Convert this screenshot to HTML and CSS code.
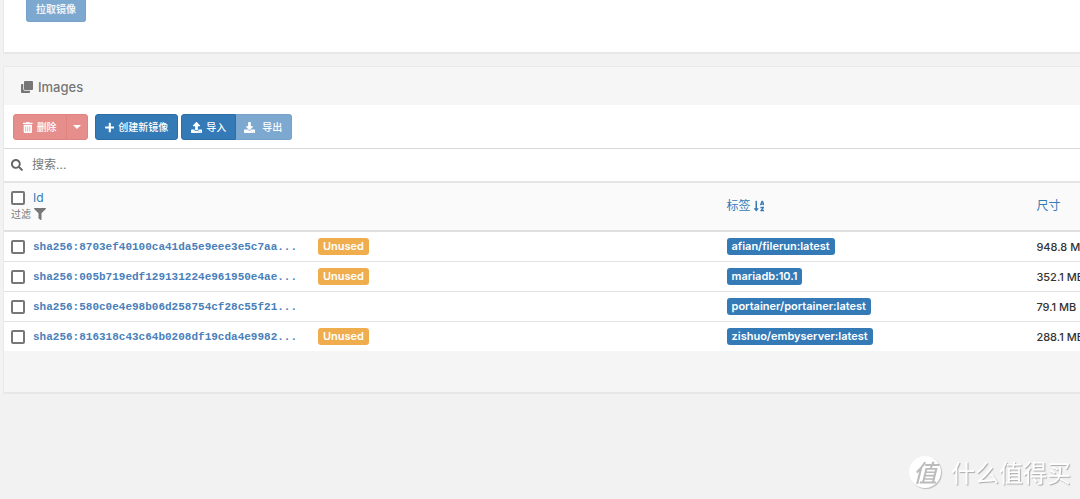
FILE: index.html
```html
<!DOCTYPE html>
<html lang="zh-CN">
<head>
<meta charset="utf-8">
<title>Images</title>
<link rel="stylesheet" href="styles.css">
</head>
<body>
<main class="page">
  <section class="panel pull-panel">
    <button class="btn primary faded pull" type="button">拉取镜像</button>
  </section>

  <section class="panel">
    <h1 class="panel-head">
      <svg class="icon" viewBox="0 0 512 512"><path d="M464 0c26.510 0 48 21.490 48 48v288c0 26.510-21.490 48-48 48H176c-26.510 0-48-21.490-48-48V48c0-26.510 21.490-48 48-48h288M176 416c-44.112 0-80-35.888-80-80V128H48c-26.510 0-48 21.490-48 48v288c0 26.510 21.490 48 48 48h288c26.510 0 48-21.490 48-48v-48H176z"/></svg>
      Images
    </h1>
    <div class="toolbar">
      <div class="group">
        <button class="btn danger faded" type="button"><svg class="icon" viewBox="0 0 448 512"><path d="M32 464a48 48 0 0 0 48 48h288a48 48 0 0 0 48-48V128H32zm272-256a16 16 0 0 1 32 0v224a16 16 0 0 1-32 0zm-96 0a16 16 0 0 1 32 0v224a16 16 0 0 1-32 0zm-96 0a16 16 0 0 1 32 0v224a16 16 0 0 1-32 0zM432 32H312l-9.400-18.700A24 24 0 0 0 281.100 0H166.800a23.720 23.720 0 0 0-21.400 13.300L136 32H16A16 16 0 0 0 0 48v32a16 16 0 0 0 16 16h416a16 16 0 0 0 16-16V48a16 16 0 0 0-16-16z"/></svg>删除</button>
        <button class="btn danger faded toggle" type="button" aria-label="更多删除选项"><span class="caret"></span></button>
      </div>
      <button class="btn primary" type="button"><svg class="icon" viewBox="0 0 448 512"><path d="M416 208H272V64c0-17.670-14.330-32-32-32h-32c-17.670 0-32 14.330-32 32v144H32c-17.670 0-32 14.330-32 32v32c0 17.670 14.330 32 32 32h144v144c0 17.670 14.330 32 32 32h32c17.670 0 32-14.330 32-32V304h144c17.670 0 32-14.330 32-32v-32c0-17.670-14.330-32-32-32z"/></svg>创建新镜像</button>
      <div class="group import-export">
        <button class="btn primary" type="button"><svg class="icon" viewBox="0 0 512 512"><path d="M296 384h-80c-13.300 0-24-10.700-24-24V192h-87.700c-17.800 0-26.700-21.500-14.100-34.100L242.300 5.700c7.500-7.500 19.800-7.500 27.300 0l152.200 152.200c12.600 12.600 3.700 34.100-14.100 34.100H320v168c0 13.300-10.700 24-24 24zm216-8v112c0 13.300-10.700 24-24 24H24c-13.300 0-24-10.700-24-24V376c0-13.300 10.700-24 24-24h136v8c0 30.900 25.100 56 56 56h80c30.900 0 56-25.100 56-56v-8h136c13.300 0 24 10.700 24 24zm-124 88c0-11-9-20-20-20s-20 9-20 20 9 20 20 20 20-9 20-20zm64 0c0-11-9-20-20-20s-20 9-20 20 9 20 20 20 20-9 20-20z"/></svg>导入</button>
        <button class="btn primary faded export" type="button"><svg class="icon" viewBox="0 0 512 512"><path d="M216 0h80c13.300 0 24 10.700 24 24v168h87.700c17.800 0 26.700 21.500 14.100 34.100L269.700 378.300c-7.500 7.500-19.800 7.500-27.300 0L90.100 226.100c-12.600-12.600-3.700-34.100 14.100-34.100H192V24c0-13.300 10.700-24 24-24zm296 376v112c0 13.300-10.700 24-24 24H24c-13.300 0-24-10.700-24-24V376c0-13.300 10.700-24 24-24h146.700l49 49c20.100 20.100 52.500 20.100 72.600 0l49-49H488c13.300 0 24 10.700 24 24zm-124 88c0-11-9-20-20-20s-20 9-20 20 9 20 20 20 20-9 20-20zm64 0c0-11-9-20-20-20s-20 9-20 20 9 20 20 20 20-9 20-20z"/></svg>导出</button>
      </div>
    </div>
    <label class="search">
      <svg class="icon" viewBox="0 0 512 512"><path d="M505 442.700L405.300 343c-4.500-4.500-10.600-7-17-7H372c27.600-35.300 44-79.700 44-128C416 93.100 322.900 0 208 0S0 93.100 0 208s93.100 208 208 208c48.300 0 92.700-16.400 128-44v16.300c0 6.400 2.500 12.500 7 17l99.700 99.700c9.400 9.400 24.600 9.400 33.900 0l28.300-28.300c9.400-9.400 9.400-24.600.1-34zM208 336c-70.700 0-128-57.200-128-128 0-70.700 57.200-128 128-128 70.700 0 128 57.200 128 128 0 70.700-57.200 128-128 128z"/></svg>
      <input class="search-input" type="text" placeholder="搜索..." aria-label="搜索">
    </label>
    <table class="images">
      <colgroup><col class="col-id"><col class="col-tags"><col class="col-size"></colgroup>
      <thead>
        <tr>
          <th>
            <div class="line"><input class="check" type="checkbox" aria-label="全选"><a class="sort" href="#">Id</a></div>
            <div class="filter">过滤 <svg class="icon" viewBox="0 0 512 512"><path d="M488 0H24C2.700 0-8 25.900 7.100 41L192 225.900V432c0 7.800 3.800 15.200 10.200 19.700l80 56C298 518.700 320 507.500 320 488V225.900L504.900 41C520 25.900 509.300 0 488 0z"/></svg></div>
          </th>
          <th><a class="sort" href="#">标签 <svg class="icon" viewBox="0 0 448 512"><path d="M176 352h-48V48a16 16 0 0 0-16-16H80a16 16 0 0 0-16 16v304H16c-14.200 0-21.400 17.200-11.300 27.300l80 96a16 16 0 0 0 22.600 0l80-96C197.300 369.300 190.200 352 176 352zm240-64H288a16 16 0 0 0-16 16v32a16 16 0 0 0 16 16h56l-61.300 70.400A32 32 0 0 0 272 446.400V464a16 16 0 0 0 16 16h128a16 16 0 0 0 16-16v-32a16 16 0 0 0-16-16h-56l61.300-70.400a32 32 0 0 0 10.700-24V304a16 16 0 0 0-16-16zm31.100-85.400l-59.300-160A16 16 0 0 0 372.700 32h-41.400a16 16 0 0 0-15.100 10.600l-59.300 160A16 16 0 0 0 272 224h24.800a16 16 0 0 0 15.200-11.100l4.400-12.900h71.200l4.400 12.900A16 16 0 0 0 407.200 224H432a16 16 0 0 0 15.100-21.400zM335.600 144L352 96l16.400 48z"/></svg></a></th>
          <th><a class="sort" href="#">尺寸</a></th>
        </tr>
      </thead>
      <tbody>
        <tr>
          <td><div class="line"><input class="check" type="checkbox" aria-label="选择 8703ef40100c"><a class="hash" href="#">sha256:8703ef40100ca41da5e9eee3e5c7aa...</a><span class="badge unused">Unused</span></div></td>
          <td><span class="badge">afian/filerun:latest</span></td>
          <td>948.8 MB</td>
        </tr>
        <tr>
          <td><div class="line"><input class="check" type="checkbox" aria-label="选择 005b719edf12"><a class="hash" href="#">sha256:005b719edf129131224e961950e4ae...</a><span class="badge unused">Unused</span></div></td>
          <td><span class="badge">mariadb:10.1</span></td>
          <td>352.1 MB</td>
        </tr>
        <tr>
          <td><div class="line"><input class="check" type="checkbox" aria-label="选择 580c0e4e98b0"><a class="hash" href="#">sha256:580c0e4e98b06d258754cf28c55f21...</a></div></td>
          <td><span class="badge">portainer/portainer:latest</span></td>
          <td>79.1 MB</td>
        </tr>
        <tr>
          <td><div class="line"><input class="check" type="checkbox" aria-label="选择 816318c43c64"><a class="hash" href="#">sha256:816318c43c64b0208df19cda4e9982...</a><span class="badge unused">Unused</span></div></td>
          <td><span class="badge">zishuo/embyserver:latest</span></td>
          <td>288.1 MB</td>
        </tr>
      </tbody>
    </table>
    <div class="panel-foot"></div>
  </section>
</main>
<div class="watermark"><span class="seal">值</span><span>什么值得买</span></div>
</body>
</html>
```

FILE: styles.css
```css
* { box-sizing: border-box; }

body {
  margin: 0;
  background: #f2f2f2;
  color: #333;
  font: 11px/16px Inter, "Noto Sans CJK SC", sans-serif;
  overflow-x: hidden;
}

.page { padding-left: 4px; }

.panel {
  margin-bottom: 13px;
  background: #fff;
  border-bottom: 2px solid #e7e7e7;
  box-shadow: -1px 0 0 #e9e9e9, 0 -1px 0 #e9e9e9;
}

.pull-panel { padding: 0 22px 30px; }

.icon {
  height: 11px;
  width: auto;
  fill: currentColor;
  flex: none;
}

.btn {
  display: inline-flex;
  align-items: center;
  gap: 4px;
  height: 26px;
  padding: 0 8px;
  border: 1px solid;
  border-radius: 3px;
  color: #fff;
  font: 500 10px/16px Inter, "Noto Sans CJK SC", sans-serif;
  white-space: nowrap;
}

.primary { background: #337ab7; border-color: #2e6da4; }
.primary.faded { background: #7da8d0; border-color: #78a2ca; }
.danger.faded { background: #e58e8b; border-color: #e0837f; }

.pull {
  height: 22px;
  border-top: 0;
  border-radius: 0 0 3px 3px;
  padding: 0 9px 4px;
  font-weight: 700;
  color: #edf4fa;
}

.panel-head {
  display: flex;
  align-items: center;
  gap: 5px;
  margin: 0;
  padding: 12px 17px 10px;
  background: #f6f6f6;
  color: #767676;
  font-size: 13px;
  font-weight: 500;
}

.panel-head .icon { height: 12px; }

.toolbar {
  display: flex;
  gap: 7px;
  padding: 9px 9px 8px;
}

.toolbar .btn { padding: 0 9px; }
.group { display: flex; }
.group .btn:first-child { border-radius: 3px 0 0 3px; }
.group .btn:last-child { border-radius: 0 3px 3px 0; }
.import-export { margin-left: -4px; }
.toolbar .export { gap: 7px; padding-left: 8px; border-left: 0; }
.toolbar .toggle { margin-left: -1px; padding: 0 6px; }

.caret {
  border: 4px solid transparent;
  border-top-color: #fff;
  border-bottom: 0;
}

.search {
  display: flex;
  align-items: center;
  gap: 9px;
  height: 33px;
  padding: 0 7px;
  border-top: 1px solid #d9d9d9;
  color: #666;
}

.search .icon { height: 12px; }

.search-input {
  flex: 1;
  border: 0;
  padding: 0;
  background: none;
  font: 12px/18px Inter, "Noto Sans CJK SC", sans-serif;
  outline: 0;
}

.search-input::placeholder { color: #777; }

.images {
  width: 100%;
  table-layout: fixed;
  border-collapse: separate;
  border-spacing: 0;
}

.col-id { width: 66.500%; }
.col-tags { width: 28.800%; }

.images th,
.images td {
  height: 30px;
  padding: 0 7px;
  text-align: left;
  white-space: nowrap;
  border-bottom: 1px solid #e3e3e3;
}

.images td { font-weight: 500; }
.images tbody tr:last-child td { height: 29px; border-bottom: 0; }

.images th {
  height: 51px;
  padding-bottom: 2px;
  background: #fafafa;
  border-top: 2px solid #e5e5e5;
  border-bottom: 2px solid #e0e0e0;
  font-weight: 400;
}

.line { display: flex; align-items: center; }

.check {
  appearance: none;
  width: 14px;
  height: 14px;
  margin: 0 8px 0 0;
  border: 2px solid #777;
  border-radius: 2px;
  background: #fff;
  flex: none;
}

.sort {
  display: inline-flex;
  align-items: center;
  gap: 3px;
  color: #337ab7;
  font-size: 12px;
  text-decoration: none;
}

.sort .icon { height: 12px; }

.filter {
  display: flex;
  align-items: center;
  gap: 3px;
  color: #777;
  font-size: 10px;
}

.filter .icon { height: 12px; }

.hash {
  width: 285px;
  color: #4a7fba;
  font: 700 11px/16px "Liberation Mono", monospace;
  text-decoration: none;
}

.badge {
  display: inline-block;
  padding: 0 5px;
  border-radius: 3px;
  background: #337ab7;
  color: #fff;
  font-size: 11px;
  font-weight: 600;
  line-height: 17px;
  vertical-align: middle;
}

.unused { background: #f0ad4e; }

.panel-foot { height: 41px; background: #f5f5f5; }

.watermark {
  position: fixed;
  right: 9px;
  bottom: 10px;
  display: flex;
  align-items: center;
  gap: 10px;
  color: #fff;
  font: 24px/34px "Noto Sans CJK SC", sans-serif;
  text-shadow: 1px 1px 1px #aaa;
}

.seal {
  width: 32px;
  height: 32px;
  border-radius: 50%;
  background: #fff;
  box-shadow: 1px 1px 1px #bbb;
  color: #bcbcbc;
  font-style: italic;
  font-weight: 500;
  line-height: 31px;
  text-align: center;
  text-shadow: none;
}
```
